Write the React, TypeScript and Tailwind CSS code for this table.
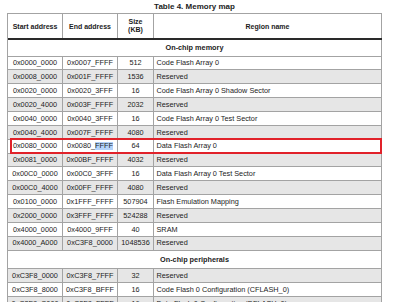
import React from 'react';

type Row = { start: string; end: React.ReactNode; size: string; name: string; mark?: boolean };

const memoryRows: Row[] = [
  { start: '0x0000_0000', end: '0x0007_FFFF', size: '512', name: 'Code Flash Array 0' },
  { start: '0x0008_0000', end: '0x001F_FFFF', size: '1536', name: 'Reserved' },
  { start: '0x0020_0000', end: '0x0020_3FFF', size: '16', name: 'Code Flash Array 0 Shadow Sector' },
  { start: '0x0020_4000', end: '0x003F_FFFF', size: '2032', name: 'Reserved' },
  { start: '0x0040_0000', end: '0x0040_3FFF', size: '16', name: 'Code Flash Array 0 Test Sector' },
  { start: '0x0040_4000', end: '0x007F_FFFF', size: '4080', name: 'Reserved' },
  {
    start: '0x0080_0000',
    end: (
      <>
        0x0080_<span className="bg-[#b4d3fb]">FFFF</span>
      </>
    ),
    size: '64',
    name: 'Data Flash Array 0',
    mark: true,
  },
  { start: '0x0081_0000', end: '0x00BF_FFFF', size: '4032', name: 'Reserved' },
  { start: '0x00C0_0000', end: '0x00C0_3FFF', size: '16', name: 'Data Flash Array 0 Test Sector' },
  { start: '0x00C0_4000', end: '0x00FF_FFFF', size: '4080', name: 'Reserved' },
  { start: '0x0100_0000', end: '0x1FFF_FFFF', size: '507904', name: 'Flash Emulation Mapping' },
  { start: '0x2000_0000', end: '0x3FFF_FFFF', size: '524288', name: 'Reserved' },
  { start: '0x4000_0000', end: '0x4000_9FFF', size: '40', name: 'SRAM' },
  { start: '0x4000_A000', end: '0xC3F8_0000', size: '1048536', name: 'Reserved' },
];

const peripheralRows: Row[] = [
  { start: '0xC3F8_0000', end: '0xC3F8_7FFF', size: '32', name: 'Reserved' },
  { start: '0xC3F8_8000', end: '0xC3F8_BFFF', size: '16', name: 'Code Flash 0 Configuration (CFLASH_0)' },
  { start: '0xC3F8_C000', end: '0xC3F8_FFFF', size: '16', name: 'Data Flash 0 Configuration (DFLASH_0)' },
];

const cols = 'grid grid-cols-[55px_55px_36px_228px]';
const cell = 'border-r border-[#a3a3a3] flex items-center';

function DataRow({ row, shaded }: { row: Row; shaded: boolean }) {
  return (
    <div className={`${cols} relative h-[13.86px] border-b border-[#a3a3a3] ${shaded ? 'bg-[#e6e6e6]' : 'bg-white'}`}>
      <div className={`${cell} justify-center`}>{row.start}</div>
      <div className={`${cell} justify-center`}>{row.end}</div>
      <div className={`${cell} justify-center`}>{row.size}</div>
      <div className={`${cell} pl-[2.5px]`}>{row.name}</div>
      {row.mark && (
        <div className="absolute top-[-2px] bottom-[-1px] left-[2px] right-0 border-2 border-[#e1222a]" />
      )}
    </div>
  );
}

function SectionRow({ title, height }: { title: string; height: string }) {
  return (
    <div className={`${height} border-b border-[#a3a3a3] bg-white flex items-center justify-center font-bold border-r`}>
      {title}
    </div>
  );
}

export default function App() {
  return (
    <div className="w-[400px] h-[302px] overflow-hidden bg-white text-[#1c1c1c] font-['Liberation_Sans',Arial,sans-serif]">
      <div className="ml-[7px] w-[375px] h-[13px] flex items-center justify-center text-[8px] font-bold leading-none">
        Table 4. Memory map
      </div>

      <div className="ml-[7px] w-[375px] border-l border-t border-[#a3a3a3] text-[7.3px] leading-none">
        <div className={`${cols} h-[26px] border-b-2 border-[#2a2a2a] font-bold text-[7px]`}>
          <div className={`${cell} justify-center`}>Start address</div>
          <div className={`${cell} justify-center`}>End address</div>
          <div className={`${cell} justify-center text-center leading-[8.5px]`}>
            Size
            <br />
            (KB)
          </div>
          <div className={`${cell} justify-center`}>Region name</div>
        </div>

        <SectionRow title="On-chip memory" height="h-[16.5px]" />
        {memoryRows.map((r, i) => (
          <DataRow key={r.start + i} row={r} shaded={i % 2 === 1} />
        ))}

        <SectionRow title="On-chip peripherals" height="h-[18.5px]" />
        {peripheralRows.map((r, i) => (
          <DataRow key={r.start + i} row={r} shaded={i % 2 === 0} />
        ))}
      </div>
    </div>
  );
}
